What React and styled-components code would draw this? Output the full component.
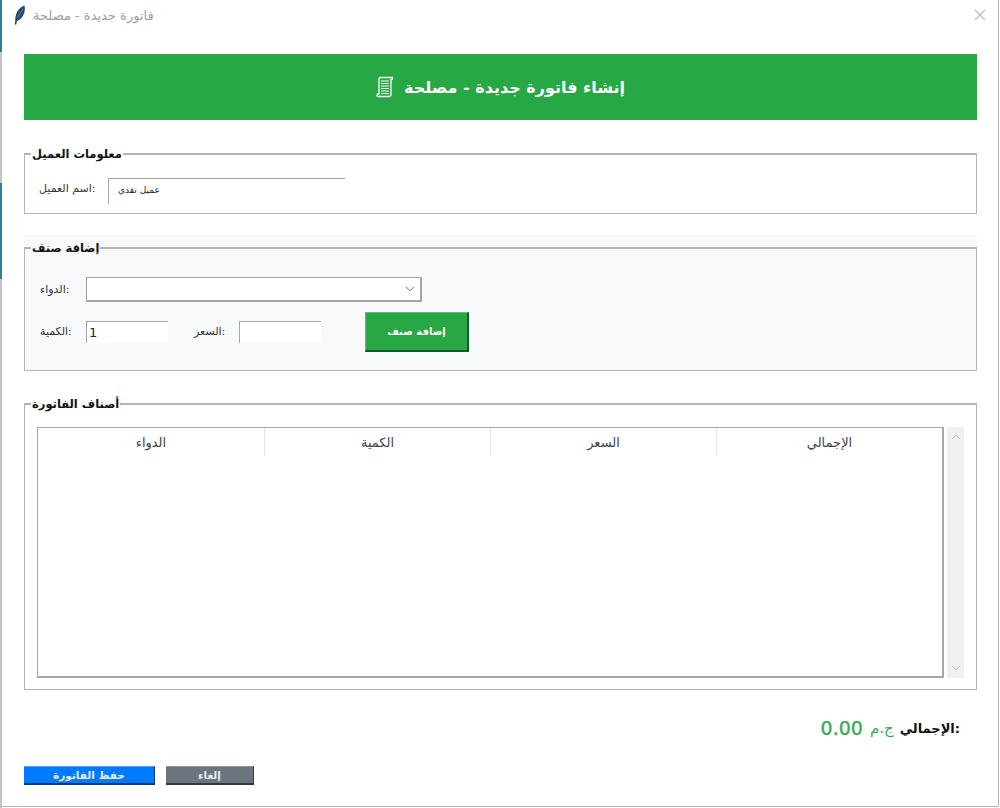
import React from "react";
import styled, { createGlobalStyle } from "styled-components";
import { ChevronDown, ChevronUp } from "lucide-react";

const Global = createGlobalStyle`
  html, body {
    margin: 0;
    padding: 0;
    background: #fff;
  }
  * {
    box-sizing: border-box;
  }
`;

const FONT = `"DejaVu Sans", "Liberation Sans", sans-serif`;

const Screen = styled.div`
  width: 1000px;
  height: 808px;
  display: flex;
  overflow: hidden;
  font-family: ${FONT};
`;

const Edge = styled.div`
  width: 2px;
  display: flex;
  flex-direction: column;
`;

const EdgePiece = styled.div`
  height: ${(p) => p.$h}px;
  background: ${(p) => p.$c};
`;

const Win = styled.div`
  width: 997px;
  height: 807px;
  background: #fff;
  border-right: 1px solid #b9b9b9;
  border-bottom: 1px solid #b9b9b9;
  display: flex;
  flex-direction: column;
`;

const TitleBar = styled.div`
  height: 30px;
  flex-shrink: 0;
  padding: 0 12px;
  display: flex;
  align-items: center;
  gap: 7px;
`;

const TitleText = styled.span`
  font-size: 13px;
  color: #a0a0a0;
`;

const CloseBtn = styled.svg`
  margin-left: auto;
`;

const Content = styled.div`
  flex: 1;
  padding: 24px 21px 22px 22px;
  display: flex;
  flex-direction: column;
`;

const Header = styled.div`
  height: 66px;
  flex-shrink: 0;
  background: #28a745;
  color: #fff;
  display: flex;
  align-items: center;
  justify-content: center;
  gap: 10px;
  font-size: 16px;
  font-weight: 700;
`;

const Group = styled.fieldset`
  margin: ${(p) => p.$top}px 0 0 0;
  padding: 0;
  height: ${(p) => p.$h}px;
  flex-shrink: 0;
  border: 1px solid #b4b4b4;
  border-top-width: 2px;
  background: ${(p) => p.$bg || "transparent"};
  min-width: 0;
  box-shadow: ${(p) => (p.$bg ? `0 -12px 0 0 ${p.$bg}` : "none")};
`;

const Legend = styled.legend`
  margin-left: 6px;
  padding: 0 1px;
  font-size: 11.5px;
  font-weight: 700;
  line-height: 14px;
  color: #111;
`;

const CustomerRow = styled.div`
  display: flex;
  align-items: flex-start;
  padding: 17px 0 0 14px;
`;

const Label = styled.label`
  width: ${(p) => p.$w}px;
  font-size: 11px;
  color: #333;
  line-height: 22px;
  white-space: nowrap;
`;

const Field = styled.input`
  width: ${(p) => p.$w}px;
  height: ${(p) => p.$h}px;
  border: 0;
  border-top: 1px solid #a6a6a6;
  border-left: 1px solid #a6a6a6;
  background: #fff;
  outline: none;
  padding: 0 0 ${(p) => p.$bottom || 0}px ${(p) => p.$pad}px;
  font-family: ${FONT};
  font-size: ${(p) => p.$size}px;
  color: #222;
`;

const AddBody = styled.div`
  display: flex;
  flex-direction: column;
  padding: 22px 0 0 15px;
`;

const DrugRow = styled.div`
  display: flex;
  align-items: center;
`;

const Combo = styled.div`
  width: 336px;
  height: 25px;
  border: 1px solid #a4a4a4;
  border-width: 1px 2px 2px 1px;
  background: #fff;
  display: flex;
  align-items: center;
  justify-content: flex-end;
  padding-right: 3px;
  color: #555;
`;

const QtyRow = styled.div`
  display: flex;
  align-items: center;
  margin-top: 10px;
`;

const PriceLabel = styled(Label)`
  margin-left: 26px;
`;

const AddButton = styled.button`
  width: 104px;
  height: 40px;
  margin-left: 44px;
  background: #28a745;
  border: 0;
  border-top: 1px solid #5cc072;
  border-left: 1px solid #5cc072;
  border-right: 2px solid #14572a;
  border-bottom: 2px solid #14572a;
  color: #fff;
  font-family: ${FONT};
  font-size: 10px;
  font-weight: 700;
  padding: 0;
`;

const TableWrap = styled.div`
  display: flex;
  padding: 16px 11px 0 12px;
  gap: 3px;
`;

const Table = styled.div`
  width: 907px;
  height: 251px;
  border: 1px solid #a8a8a8;
  border-width: 1px 2px 2px 1px;
  background: #fff;
`;

const HeadRow = styled.div`
  height: 28px;
  display: grid;
  grid-template-columns: repeat(4, 1fr);
`;

const HeadCell = styled.div`
  display: flex;
  align-items: center;
  justify-content: center;
  font-size: 13px;
  color: #444;
  border-left: ${(p) => (p.$first ? "0" : "1px solid #e4e4e4")};
`;

const Scrollbar = styled.div`
  width: 17px;
  height: 251px;
  background: #f0eff2;
  color: #a8a8a8;
  display: flex;
  flex-direction: column;
  align-items: center;
  justify-content: space-between;
  padding: 3px 0;
`;

const TotalRow = styled.div`
  display: flex;
  align-items: center;
  gap: 6px;
  margin: 27px 17px 0 auto;
  height: 22px;
  flex-shrink: 0;
`;

const TotalAmount = styled.span`
  font-size: 19px;
  font-weight: 500;
  color: #3da85a;
  margin-right: 1px;
  -webkit-text-stroke: 0.4px #3da85a;
`;

const TotalCurrency = styled.span`
  font-size: 15px;
  color: #3da85a;
`;

const TotalLabel = styled.span`
  font-size: 13px;
  font-weight: 700;
  color: #111;
`;

const Actions = styled.div`
  display: flex;
  gap: 11px;
  margin-top: 27px;
  flex-shrink: 0;
`;

const ActionButton = styled.button`
  width: ${(p) => p.$w}px;
  height: 19px;
  background: ${(p) => p.$bg};
  border: 0;
  border-top: 1px solid ${(p) => p.$light};
  border-right: 1px solid ${(p) => p.$dark};
  border-bottom: 2px solid ${(p) => p.$dark};
  color: #e9eef5;
  font-family: ${FONT};
  font-size: 10.5px;
  font-weight: 700;
  padding: 0;
  line-height: 1;
`;

function Feather() {
  return (
    <svg width="12" height="20" viewBox="0 0 12 20">
      <path d="M1.5 16 C0.5 10 4 2.5 10.5 0.5 C12 7 8.5 14 3 16 Z" fill="#2b4a6b" />
      <path d="M2.5 14 L1.5 19.5" stroke="#333" strokeWidth="1.4" fill="none" />
      <path d="M3.5 12.5 L9 4" stroke="#7f9ab3" strokeWidth="0.7" fill="none" />
    </svg>
  );
}

function Scroll() {
  return (
    <svg width="18" height="22" viewBox="0 0 18 22" fill="none" stroke="#fff">
      <path d="M4 1.5 H16 C16.8 1.5 17 3 16 3.5 H15 V18 C15 20 14 20.5 13 20.5 H2 C1 20.5 0.5 19 1.5 18 H3 V3 C3 2 3.5 1.5 4 1.5 Z" fill="#28a745" strokeWidth="1.3" />
      <path d="M5 5 H13 M5 7.5 H13 M5 10 H13 M5 12.5 H13 M5 15 H13 M5 17.5 H13" strokeWidth="1.2" />
    </svg>
  );
}

const columns = ["الدواء", "الكمية", "السعر", "الإجمالي"];

export default function App() {
  return (
    <Screen>
      <Global />
      <Edge>
        <EdgePiece $h={52} $c="#2f7f96" />
        <EdgePiece $h={131} $c="#c4c4c4" />
        <EdgePiece $h={96} $c="#2f7f96" />
        <EdgePiece $h={529} $c="#c4c4c4" />
      </Edge>
      <Win>
        <TitleBar>
          <Feather />
          <TitleText>فاتورة جديدة - مصلحة</TitleText>
          <CloseBtn width="12" height="12" viewBox="0 0 12 12">
            <path d="M1 1 L11 11 M11 1 L1 11" stroke="#bdbdbd" strokeWidth="1.2" />
          </CloseBtn>
        </TitleBar>
        <Content>
          <Header>
            <Scroll />
            <span>إنشاء فاتورة جديدة - مصلحة</span>
          </Header>
          <Group $top={27} $h={67}>
            <Legend>معلومات العميل</Legend>
            <CustomerRow>
              <Label $w={69}>اسم العميل:</Label>
              <Field $w={237} $h={26} $pad={9} $bottom={4} $size={9} defaultValue="عميل نقدي" />
            </CustomerRow>
          </Group>
          <Group $top={27} $h={130} $bg="#f8f9fa">
            <Legend>إضافة صنف</Legend>
            <AddBody>
              <DrugRow>
                <Label $w={46}>الدواء:</Label>
                <Combo>
                  <ChevronDown size={14} strokeWidth={1.5} />
                </Combo>
              </DrugRow>
              <QtyRow>
                <Label $w={46}>الكمية:</Label>
                <Field $w={82} $h={22} $pad={2} $size={13} defaultValue="1" />
                <PriceLabel $w={45}>السعر:</PriceLabel>
                <Field $w={82} $h={22} $pad={2} $size={13} />
                <AddButton>إضافة صنف</AddButton>
              </QtyRow>
            </AddBody>
          </Group>
          <Group $top={26} $h={293}>
            <Legend>أصناف الفاتورة</Legend>
            <TableWrap>
              <Table>
                <HeadRow>
                  {columns.map((c, i) => (
                    <HeadCell key={c} $first={i === 0}>{c}</HeadCell>
                  ))}
                </HeadRow>
              </Table>
              <Scrollbar>
                <ChevronUp size={14} strokeWidth={1.5} />
                <ChevronDown size={14} strokeWidth={1.5} />
              </Scrollbar>
            </TableWrap>
          </Group>
          <TotalRow>
            <TotalAmount>0.00</TotalAmount>
            <TotalCurrency>ج.م</TotalCurrency>
            <TotalLabel>الإجمالي:</TotalLabel>
          </TotalRow>
          <Actions>
            <ActionButton $w={131} $bg="#007bff" $light="#4da3ff" $dark="#0a3a78">حفظ الفاتورة</ActionButton>
            <ActionButton $w={88} $bg="#6c757d" $light="#8d959c" $dark="#33383d">إلغاء</ActionButton>
          </Actions>
        </Content>
      </Win>
    </Screen>
  );
}
